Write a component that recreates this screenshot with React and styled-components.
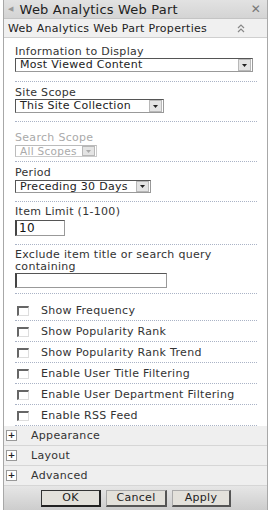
import React from 'react'
import styled, { createGlobalStyle } from 'styled-components'

const Global = createGlobalStyle`
  html, body { margin: 0; padding: 0; background: #fff; }
  body {
    font-family: "DejaVu Sans", Verdana, sans-serif;
    font-size: 11px;
    letter-spacing: 0.3px;
    color: #333;
  }
`

const Panel = styled.div`
  width: 265px;
  height: 510px;
  margin-left: 3px;
  border-left: 1px solid #a8a8a8;
  border-right: 1px solid #a8a8a8;
  display: flex;
  flex-direction: column;
  box-sizing: border-box;
`

const TitleBar = styled.div`
  height: 18px;
  flex: none;
  background: linear-gradient(#e2e2e2, #d4d4d4);
  border-bottom: 1px solid #c4c4c4;
  display: flex;
  align-items: center;
  padding: 0 6px 0 4px;
  font-size: 13px;
  color: #222;
  letter-spacing: 0.2px;
`

const Arrow = styled.span`
  font-size: 7px;
  color: #999;
  margin-right: 6px;
`

const Close = styled.span`
  margin-left: auto;
  font-size: 12px;
  font-weight: bold;
  color: #777;
`

const SubBar = styled.div`
  height: 18px;
  flex: none;
  background: #f0f0f0;
  border-bottom: 1px solid #cfcfcf;
  display: flex;
  align-items: center;
  padding: 0 22px 0 4px;
  color: #222;
`

const Collapse = styled.span`
  margin-left: auto;
  display: flex;
`

const Body = styled.div`
  flex: none;
  height: 388px;
  padding: 3px 10px 0 11px;
  background: #fff;
  box-sizing: border-box;
`

const Field = styled.div`
  padding: ${p => p.$top}px 0 ${p => p.$bottom}px;
  border-bottom: 1px dotted #aab3c6;
`

const Label = styled.div`
  line-height: ${p => p.$lh || 13}px;
  color: ${p => (p.$disabled ? '#aaa' : '#333')};
  margin-bottom: ${p => p.$gap || 0}px;
`

const SelectBox = styled.div`
  width: ${p => p.$w}px;
  height: ${p => p.$h}px;
  box-sizing: border-box;
  border: 1px solid ${p => (p.$disabled ? '#bbb' : '#555')};
  border-bottom-color: ${p => (p.$disabled ? '#ccc' : '#999')};
  border-right-color: ${p => (p.$disabled ? '#ccc' : '#999')};
  display: flex;
  align-items: center;
  font-size: ${p => (p.$disabled ? 10.5 : 11)}px;
  line-height: 10px;
  color: ${p => (p.$disabled ? '#aaa' : '#222')};
  padding-left: 4px;
  background: #fff;
`

const DropBtn = styled.span`
  margin-left: auto;
  flex: none;
  width: 11px;
  height: ${p => p.$h}px;
  margin-right: 1px;
  background: #e4e4e4;
  border: 1px solid #b8b8b8;
  display: flex;
  align-items: center;
  justify-content: center;
`

const TextBox = styled.div`
  width: ${p => p.$w}px;
  height: ${p => p.$h}px;
  border: 1px solid #999;
  border-top-color: #555;
  border-left: 2px solid #444;
  font-size: 12px;
  color: #111;
  padding-left: 2px;
  display: flex;
  align-items: center;
  box-sizing: border-box;
`

const Checks = styled.div`
  margin-top: 6px;
`

const CheckRow = styled.div`
  height: 20px;
  display: flex;
  align-items: center;
  border-bottom: 1px dotted #aab3c6;
  color: #333;
`

const Box = styled.span`
  width: 9px;
  height: 7px;
  border: 1px solid #ddd;
  border-top: 2px solid #666;
  border-left: 2px solid #666;
  margin: 2px 12px 0 2px;
`

const Section = styled.div`
  height: 19px;
  flex: none;
  background: #efefef;
  border-bottom: 1px solid #d6d6d6;
  display: flex;
  align-items: center;
  color: #333;
  padding-left: 2px;
`

const Plus = styled.span`
  width: 9px;
  height: 9px;
  border: 1px solid #999;
  background: #fff;
  font-size: 9px;
  line-height: 9px;
  letter-spacing: 0;
  text-align: center;
  font-weight: bold;
  color: #222;
  margin-right: 14px;
`

const Footer = styled.div`
  flex: 1;
  background: linear-gradient(#e6e6e6, #cdcdcd);
  display: flex;
  align-items: center;
  padding-left: 37px;
  gap: 5px;
`

const Button = styled.div`
  width: ${p => p.$w}px;
  height: 14px;
  background: #e3e1db;
  border: 1px solid ${p => (p.$def ? '#333' : '#aaa')};
  border-right: 2px solid ${p => (p.$def ? '#222' : '#555')};
  border-bottom: 2px solid ${p => (p.$def ? '#222' : '#555')};
  color: #222;
  display: flex;
  align-items: center;
  justify-content: center;
`

const Caret = ({ color }) => (
  <svg width="5" height="3" viewBox="0 0 5 3">
    <path d="M0 0h5L2.5 3z" fill={color} />
  </svg>
)

const DoubleUp = () => (
  <svg width="8" height="9" viewBox="0 0 8 9">
    <path d="M1 4l3-3 3 3M1 8l3-3 3 3" fill="none" stroke="#888" strokeWidth="1.2" />
  </svg>
)

const Select = ({ w, h = 14, text, disabled }) => (
  <SelectBox $w={w} $h={h} $disabled={disabled}>
    {text}
    <DropBtn $h={h - 4}>
      <Caret color={disabled ? '#aaa' : '#222'} />
    </DropBtn>
  </SelectBox>
)

const checks = [
  'Show Frequency',
  'Show Popularity Rank',
  'Show Popularity Rank Trend',
  'Enable User Title Filtering',
  'Enable User Department Filtering',
  'Enable RSS Feed',
]

export default function App() {
  return (
    <>
      <Global />
      <Panel>
        <TitleBar>
          <Arrow>◀</Arrow>Web Analytics Web Part<Close>✕</Close>
        </TitleBar>
        <SubBar>
          Web Analytics Web Part Properties
          <Collapse><DoubleUp /></Collapse>
        </SubBar>
        <Body>
          <Field $top={4} $bottom={9}>
            <Label>Information to Display</Label>
            <Select w={238} text="Most Viewed Content" />
          </Field>
          <Field $top={4} $bottom={8}>
            <Label>Site Scope</Label>
            <Select w={149} text="This Site Collection" />
          </Field>
          <Field $top={9} $bottom={4}>
            <Label $disabled $gap={1}>Search Scope</Label>
            <Select w={82} h={12} text="All Scopes" disabled />
          </Field>
          <Field $top={4} $bottom={8}>
            <Label $gap={1}>Period</Label>
            <Select w={136} h={13} text="Preceding 30 Days" />
          </Field>
          <Field $top={3} $bottom={8}>
            <Label $gap={2}>Item Limit (1-100)</Label>
            <TextBox $w={50} $h={16}>10</TextBox>
          </Field>
          <Field $top={4} $bottom={5}>
            <Label $lh={12}>Exclude item title or search query containing</Label>
            <TextBox $w={152} $h={15} />
          </Field>
          <Checks>
            {checks.map(c => (
              <CheckRow key={c}><Box />{c}</CheckRow>
            ))}
          </Checks>
        </Body>
        <Section><Plus>+</Plus>Appearance</Section>
        <Section><Plus>+</Plus>Layout</Section>
        <Section><Plus>+</Plus>Advanced</Section>
        <Footer>
          <Button $w={57} $def>OK</Button>
          <Button $w={58}>Cancel</Button>
          <Button $w={56}>Apply</Button>
        </Footer>
      </Panel>
    </>
  )
}
